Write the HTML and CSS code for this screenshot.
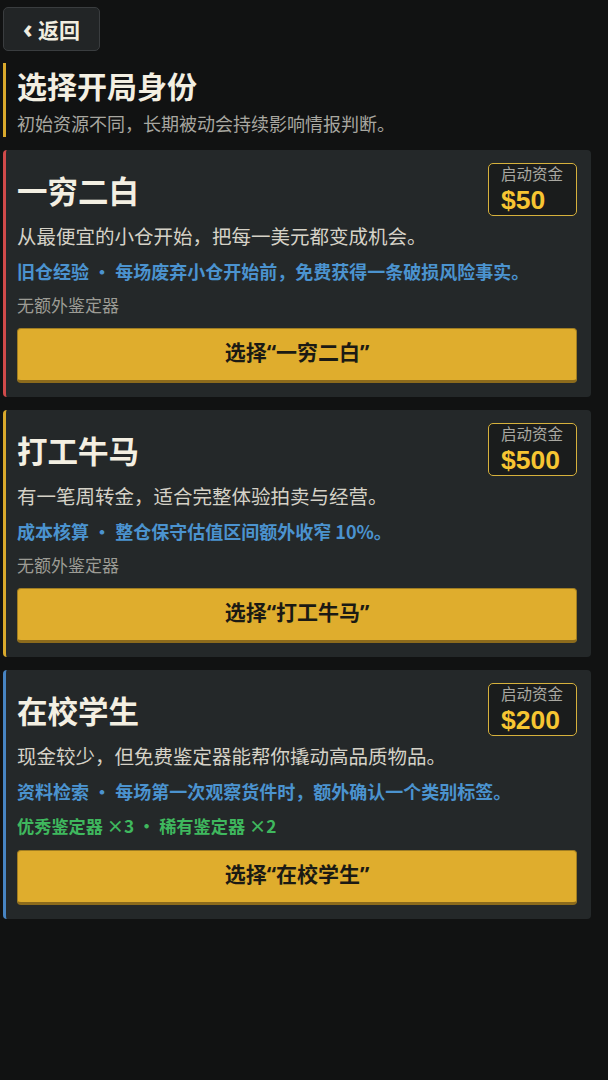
FILE: index.html
```html
<!DOCTYPE html>
<html lang="zh-CN">
<head>
<meta charset="utf-8">
<title>选择开局身份</title>
<link rel="stylesheet" href="styles.css">
</head>
<body>
<div class="page">
  <button class="back"><span class="chev">‹</span> 返回</button>

  <header class="intro">
    <h1 class="intro-title">选择开局身份</h1>
    <p class="intro-sub">初始资源不同，长期被动会持续影响情报判断。</p>
  </header>

  <section class="card card-red">
    <div class="card-head">
      <h2 class="card-title">一穷二白</h2>
      <div class="fund">
        <div class="fund-label">启动资金</div>
        <div class="fund-value">$50</div>
      </div>
    </div>
    <p class="card-desc">从最便宜的小仓开始，把每一美元都变成机会。</p>
    <p class="card-perk">旧仓经验 · 每场废弃小仓开始前，免费获得一条破损风险事实。</p>
    <p class="card-gear">无额外鉴定器</p>
    <button class="pick">选择“一穷二白”</button>
  </section>

  <section class="card card-gold">
    <div class="card-head">
      <h2 class="card-title">打工牛马</h2>
      <div class="fund">
        <div class="fund-label">启动资金</div>
        <div class="fund-value">$500</div>
      </div>
    </div>
    <p class="card-desc">有一笔周转金，适合完整体验拍卖与经营。</p>
    <p class="card-perk">成本核算 · 整仓保守估值区间额外收窄 10%。</p>
    <p class="card-gear">无额外鉴定器</p>
    <button class="pick">选择“打工牛马”</button>
  </section>

  <section class="card card-blue">
    <div class="card-head">
      <h2 class="card-title">在校学生</h2>
      <div class="fund">
        <div class="fund-label">启动资金</div>
        <div class="fund-value">$200</div>
      </div>
    </div>
    <p class="card-desc">现金较少，但免费鉴定器能帮你撬动高品质物品。</p>
    <p class="card-perk">资料检索 · 每场第一次观察货件时，额外确认一个类别标签。</p>
    <p class="card-gear card-gear-green">优秀鉴定器 ×3 · 稀有鉴定器 ×2</p>
    <button class="pick">选择“在校学生”</button>
  </section>
</div>
</body>
</html>
```

FILE: styles.css
```css
* { box-sizing: border-box; }

html, body {
  margin: 0;
  padding: 0;
  background: #111212;
}

body {
  font-family: "Noto Sans CJK SC", "Noto Sans", sans-serif;
  color: #f1ede0;
  width: 608px;
  min-height: 1080px;
}

.page {
  padding: 7px 17px 0 3px;
  display: flex;
  flex-direction: column;
}

.back {
  align-self: flex-start;
  width: 97px;
  height: 44px;
  margin: 0 0 12px 0;
  padding: 0 0 2px 0;
  background: #222526;
  border: 1px solid #3a3d3f;
  border-radius: 5px;
  color: #f1ede0;
  font-family: "Noto Sans", "Noto Sans CJK SC", sans-serif;
  font-size: 21px;
  font-weight: 700;
  line-height: 40px;
  text-align: center;
}

.chev {
  font-size: 25px;
  font-weight: 800;
}

.intro {
  border-left: 3px solid #d9a92c;
  padding: 3px 0 1px 11px;
  margin-bottom: 13px;
}

.intro-title {
  margin: 0;
  font-size: 30px;
  line-height: 38px;
  font-weight: 700;
  color: #f3efe2;
}

.intro-sub {
  margin: 6px 0 0 0;
  font-size: 18px;
  line-height: 26px;
  color: #a8a7a0;
}

.card {
  background: #242829;
  border-left: 3px solid #d04848;
  border-radius: 4px;
  padding: 13px 14px 14px 11px;
  margin-bottom: 13px;
}

.card-red { border-left-color: #d04a4a; }
.card-gold { border-left-color: #d9a92c; }
.card-blue { border-left-color: #4784c2; }

.card-head {
  display: flex;
  align-items: center;
  justify-content: space-between;
}

.card-title {
  margin: 0;
  font-size: 30.5px;
  line-height: 38px;
  font-weight: 700;
  color: #f3efe2;
}

.fund {
  border: 1px solid #d6b13c;
  border-radius: 5px;
  background: #1a1c1c;
  padding: 0 13px 2px 12px;
}

.fund-label {
  font-size: 15.5px;
  line-height: 18px;
  color: #a9a8a1;
}

.fund-value {
  margin-top: 5px;
  font-family: "Liberation Sans", Arial, sans-serif;
  font-size: 26.5px;
  line-height: 26px;
  font-weight: 700;
  color: #f7c532;
}

.card-desc {
  margin: 6px 0 0 0;
  font-size: 19.5px;
  line-height: 28px;
  color: #d5d2c7;
}

.card-perk {
  margin: 8px 0 0 0;
  font-size: 18px;
  line-height: 26px;
  font-weight: 700;
  color: #4b93cf;
}

.card-gear {
  margin: 9px 0 0 0;
  font-size: 17px;
  line-height: 24px;
  color: #9c9c95;
}

.card-gear-green {
  font-weight: 700;
  font-size: 17.2px;
  line-height: 26px;
  color: #3fb85e;
}

.pick {
  display: block;
  width: 100%;
  margin: 11px 0 0 0;
  padding: 8px 0 13px 0;
  background: #dfad2d;
  border: 1px solid #a07d22;
  border-bottom: 3px solid #8c6b1c;
  border-radius: 4px;
  font-family: "Noto Sans", "Noto Sans CJK SC", sans-serif;
  font-size: 21px;
  line-height: 30px;
  font-weight: 700;
  color: #1b1a14;
  text-align: center;
}
```
